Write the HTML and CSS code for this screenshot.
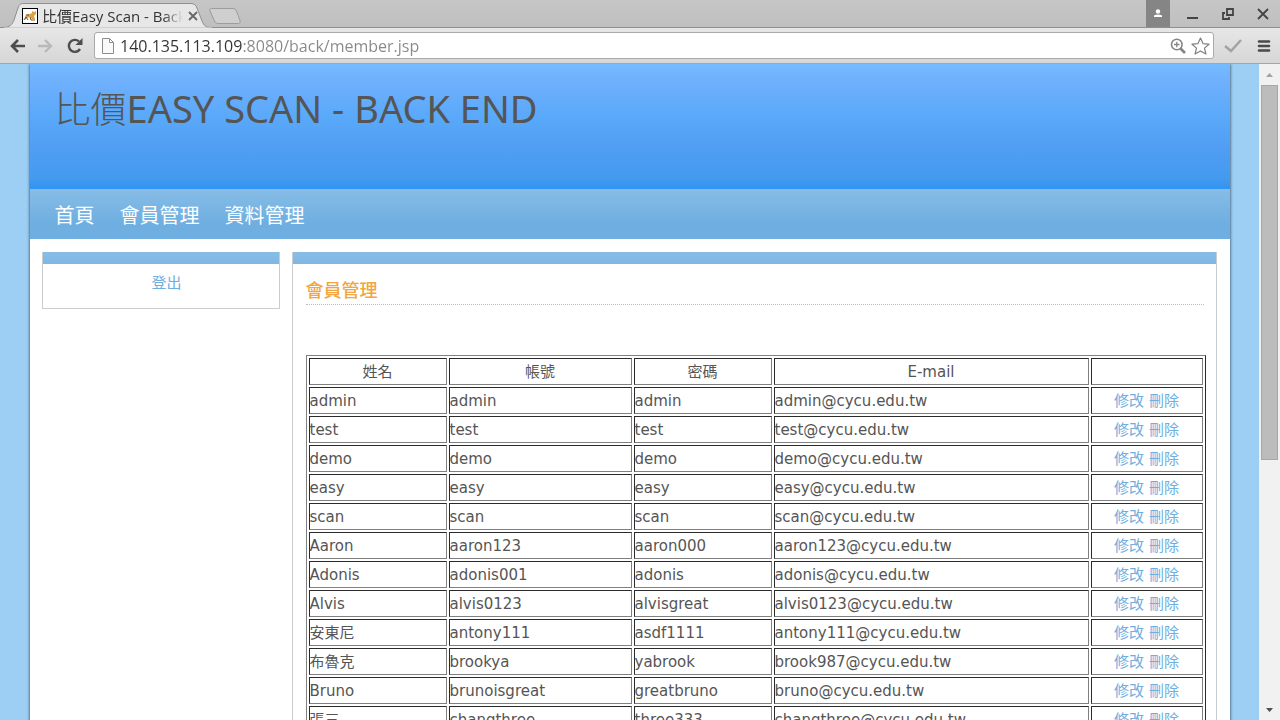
FILE: index.html
```html
<!DOCTYPE html>
<html lang="zh-Hant">
<head>
<meta charset="utf-8">
<title>比價Easy Scan - Back End</title>
<link rel="stylesheet" href="styles.css">
</head>
<body>
<div class="browser">
  <div class="tabstrip">
    <div class="tab">
      <svg class="tab-shape" width="208" height="28" viewBox="0 0 208 28" aria-hidden="true"><path d="M0 27.500C6 27 8 25 10 20L14 8C15.500 4 17 3.500 20 3.500H187C190 3.500 192 5 193 8L198 21C200 26 202 27.500 208 27.500" fill="#e7e7e7" stroke="#8f8f8f"/><path d="M0 28H208" stroke="#e4e4e4"/></svg>
      <div class="tab-content">
        <svg class="favicon" width="16" height="16" viewBox="0 0 16 16" aria-hidden="true"><rect x=".5" y=".5" width="15" height="15" fill="#fff" stroke="#000"/><path d="M3 8L6 6L8 6L10 5L10 3L12 4L14 3L14 6L12 8L13 11H10L8 9L5 10L3 12Z" fill="#dca34a"/><path d="M2 12L4 9L6 12M8 9L9 12L13 12M4 7L7 7" fill="none" stroke="#6b5737"/></svg>
        <span class="tab-title">比價Easy Scan - Back End</span>
        <button class="tab-close" aria-label="Close tab"><svg width="10" height="10" viewBox="0 0 10 10"><path d="M1 1L9 9M9 1L1 9" stroke="#666" stroke-width="1.800"/></svg></button>
      </div>
    </div>
    <button class="new-tab" aria-label="New tab"><svg width="34" height="18" viewBox="0 0 34 18"><path d="M3.500 1.500H25Q27.500 1.500 28.500 4L32 13.500Q33 16.500 30.500 16.500H10Q7.500 16.500 6.500 14L2 4Q1 1.500 3.500 1.500Z" fill="#cfcfcf" stroke="#9c9c9c"/></svg></button>
    <div class="window-buttons">
      <button class="profile" aria-label="Profile"><svg width="10" height="10" viewBox="0 0 10 10"><circle cx="5" cy="2.500" r="2.200" fill="#fff"/><path d="M1 8V7Q1 5.500 5 5.500T9 7V8Z" fill="#fff"/></svg></button>
      <button class="win" aria-label="Minimize"><svg width="12" height="12" viewBox="0 0 12 12"><path d="M0 10H11" stroke="#444" stroke-width="2"/></svg></button>
      <button class="win" aria-label="Restore"><svg width="12" height="12" viewBox="0 0 12 12"><path d="M5 1H11V7H5ZM3 5H1V11H7V9" fill="none" stroke="#444" stroke-width="1.800"/></svg></button>
      <button class="win" aria-label="Close window"><svg width="12" height="12" viewBox="0 0 12 12"><path d="M1 1L11 11M11 1L1 11" stroke="#444" stroke-width="1.800"/></svg></button>
    </div>
  </div>
  <div class="toolbar">
    <button class="tool" aria-label="Back"><svg width="16" height="14" viewBox="0 0 16 14"><path d="M8 1L2 7L8 13M2 7H15" fill="none" stroke="#4d4d4d" stroke-width="2.600"/></svg></button>
    <button class="tool" aria-label="Forward"><svg width="16" height="14" viewBox="0 0 16 14"><path d="M8 1L14 7L8 13M14 7H1" fill="none" stroke="#b9b9b9" stroke-width="2.400"/></svg></button>
    <button class="tool" aria-label="Reload"><svg width="16" height="16" viewBox="0 0 16 16"><path d="M13 11A6 6 0 1 1 12 3.500" fill="none" stroke="#4d4d4d" stroke-width="2.400"/><path d="M15.500 0V7H8.500Z" fill="#4d4d4d"/></svg></button>
    <div class="omnibox">
      <svg width="12" height="16" viewBox="0 0 12 16" aria-hidden="true"><path d="M.5 .5H7.500L11.500 4.500V15.500H.5ZM7.500 .5V4.500H11.500" fill="#fafafa" stroke="#8c8c8c"/></svg>
      <input class="address" type="text" aria-label="Address" value="140.135.113.109:8080/back/member.jsp">
      <button class="in-icon" aria-label="Zoom"><svg width="16" height="16" viewBox="0 0 16 16"><circle cx="6.800" cy="6.500" r="5.300" fill="none" stroke="#858585" stroke-width="1.600"/><path d="M4 6.500H9.500M6.800 3.800V9.300" stroke="#858585" stroke-width="1.300"/><path d="M10.500 10.500L15 15" stroke="#858585" stroke-width="2.600"/></svg></button>
      <button class="in-icon" aria-label="Bookmark"><svg width="19" height="18" viewBox="0 0 19 18"><path d="M9.500 1L12 6.600L18 7.200L13.500 11.100L14.900 17L9.500 13.900L4.100 17L5.500 11.100L1 7.200L7 6.600Z" fill="#fff" stroke="#808080" stroke-width="1.200" stroke-linejoin="round"/></svg></button>
    </div>
    <button class="tool" aria-label="Extension"><svg width="18" height="14" viewBox="0 0 18 14"><path d="M1 7L7 12L17 1" fill="none" stroke="#a2a2a2" stroke-width="2.400"/></svg></button>
    <button class="tool menu" aria-label="Menu"><svg width="14" height="14" viewBox="0 0 14 14"><path d="M2 2.500H12M2 7H12M2 11.500H12" stroke="#4a4a4a" stroke-width="2.600" stroke-linecap="round"/></svg></button>
  </div>
  <div class="viewport">
    <div class="page">
      <div class="wrapper">
        <header class="banner"><h1><span class="han">比價</span>EASY SCAN - BACK END</h1></header>
        <nav class="nav"><a href="#">首頁</a><a href="#">會員管理</a><a href="#">資料管理</a></nav>
        <div class="columns">
          <aside class="box side"><a href="#">登出</a></aside>
          <main class="box main">
            <h2>會員管理</h2>
            <table class="members">
              <colgroup><col class="c-name"><col class="c-account"><col class="c-pass"><col class="c-mail"><col class="c-act"></colgroup>
              <thead><tr><th>姓名</th><th>帳號</th><th>密碼</th><th>E-mail</th><th></th></tr></thead>
              <tbody>
                <tr><td>admin</td><td>admin</td><td>admin</td><td>admin@cycu.edu.tw</td><td class="act"><a href="#">修改</a> <a href="#">刪除</a></td></tr>
                <tr><td>test</td><td>test</td><td>test</td><td>test@cycu.edu.tw</td><td class="act"><a href="#">修改</a> <a href="#">刪除</a></td></tr>
                <tr><td>demo</td><td>demo</td><td>demo</td><td>demo@cycu.edu.tw</td><td class="act"><a href="#">修改</a> <a href="#">刪除</a></td></tr>
                <tr><td>easy</td><td>easy</td><td>easy</td><td>easy@cycu.edu.tw</td><td class="act"><a href="#">修改</a> <a href="#">刪除</a></td></tr>
                <tr><td>scan</td><td>scan</td><td>scan</td><td>scan@cycu.edu.tw</td><td class="act"><a href="#">修改</a> <a href="#">刪除</a></td></tr>
                <tr><td>Aaron</td><td>aaron123</td><td>aaron000</td><td>aaron123@cycu.edu.tw</td><td class="act"><a href="#">修改</a> <a href="#">刪除</a></td></tr>
                <tr><td>Adonis</td><td>adonis001</td><td>adonis</td><td>adonis@cycu.edu.tw</td><td class="act"><a href="#">修改</a> <a href="#">刪除</a></td></tr>
                <tr><td>Alvis</td><td>alvis0123</td><td>alvisgreat</td><td>alvis0123@cycu.edu.tw</td><td class="act"><a href="#">修改</a> <a href="#">刪除</a></td></tr>
                <tr><td>安東尼</td><td>antony111</td><td>asdf1111</td><td>antony111@cycu.edu.tw</td><td class="act"><a href="#">修改</a> <a href="#">刪除</a></td></tr>
                <tr><td>布魯克</td><td>brookya</td><td>yabrook</td><td>brook987@cycu.edu.tw</td><td class="act"><a href="#">修改</a> <a href="#">刪除</a></td></tr>
                <tr><td>Bruno</td><td>brunoisgreat</td><td>greatbruno</td><td>bruno@cycu.edu.tw</td><td class="act"><a href="#">修改</a> <a href="#">刪除</a></td></tr>
                <tr><td>張三</td><td>changthree</td><td>three333</td><td>changthree@cycu.edu.tw</td><td class="act"><a href="#">修改</a> <a href="#">刪除</a></td></tr>
              </tbody>
            </table>
          </main>
        </div>
      </div>
    </div>
    <div class="scrollbar" aria-hidden="true">
      <svg width="21" height="21" viewBox="0 0 21 21"><path d="M7 13L10.500 9L14 13Z" fill="#a3a3a3"/></svg>
      <div class="track"><div class="thumb"></div></div>
      <svg width="21" height="21" viewBox="0 0 21 21"><path d="M7 9L10.500 13L14 9Z" fill="#505050"/></svg>
    </div>
  </div>
</div>
</body>
</html>
```
FILE: styles.css
```css
* { box-sizing: border-box; }
body { margin: 0; color: #555; font: 15px/25px "DejaVu Sans", "Noto Sans CJK TC", sans-serif; }
button { display: flex; align-items: center; justify-content: center; padding: 0; border: 0; background: none; }
svg { display: block; flex: none; }
a { color: #6faee0; text-decoration: none; }

.browser { display: flex; flex-direction: column; height: 100vh; overflow: hidden; }

/* Window chrome */
.tabstrip { display: flex; height: 28px; flex: none; background: linear-gradient(#c6c6c6, #bfbfbf); box-shadow: inset 0 -1px #8f8f8f; }
.tab { display: grid; grid-template-columns: 100%; width: 208px; margin-left: 4px; }
.tab > * { grid-area: 1 / 1; }
.tab-content { display: flex; align-items: center; padding: 4px 9px 0 18px; }
.tab-title { flex: 1; min-width: 0; margin-left: 4px; overflow: hidden; white-space: nowrap; color: #333; font: 15px/20px "Open Sans", "Noto Sans CJK TC", sans-serif; -webkit-mask-image: linear-gradient(90deg, #000 86%, transparent); mask-image: linear-gradient(90deg, #000 86%, transparent); }
.tab-close { width: 20px; height: 20px; flex: none; }
.new-tab { height: 18px; margin-top: 7px; margin-left: -4px; }
.window-buttons { display: flex; margin-left: auto; }
.profile { width: 24px; height: 27px; margin-right: 5px; background: #858585; }
.win { width: 35px; height: 27px; }
.toolbar { display: flex; align-items: center; height: 36px; flex: none; padding: 0 0 0 6px; border-bottom: 1px solid #a5a5a5; background: linear-gradient(#e7e7e7, #d6d6d6); }
.tool { width: 30px; height: 28px; }
.tool:first-child { width: 24px; }
.menu { width: 32px; }
.omnibox { display: flex; flex: 1; align-items: center; height: 27px; margin-left: 4px; margin-right: 4px; padding: 0 2px 0 7px; border: 1px solid #aaa; border-radius: 3px; background: #fff; }
.address { flex: 1; min-width: 0; height: 24px; margin-left: 6px; padding: 0; border: 0; outline: 0; color: transparent; background: linear-gradient(90deg, #333 122px, #888 122px); -webkit-background-clip: text; background-clip: text; font: 16px/24px "Open Sans", sans-serif; }
.in-icon { width: 22px; height: 24px; }

/* Page */
.viewport { display: flex; flex: 1; min-height: 0; }
.page { flex: 1; min-width: 0; overflow: hidden; padding: 0 29px; background: #9dcef4; }
.wrapper { max-width: 1200px; min-height: 100%; margin: 0 auto; background: #fff; box-shadow: 0 0 3px #234; }
.banner { height: 125px; padding: 20px 25px; background: linear-gradient(#76bbff, #6fb0fd 14%, #58a8f9 45%, #539ff4 62%, #439aef 92%, #3093f4); }
h1 { margin: 0; font: 400 38px/48px "Noto Sans", "Noto Sans CJK TC", sans-serif; white-space: nowrap; }
.han { font-size: 36px; font-weight: 300; }
.nav { display: flex; gap: 25px; height: 50px; padding: 0 25px; background: linear-gradient(#87bde7, #6eaee0 70%); }
.nav a { color: #fff; font-size: 20px; line-height: 54px; }
.columns { display: flex; align-items: stretch; gap: 12px; padding: 13px 13px 13px 12px; }
.box { border: 1px solid #ccc; border-top: 0; background: linear-gradient(#87bee6, #7fb7e4) 0 0 / 100% 12px no-repeat; }
.side { flex: none; align-self: flex-start; width: 238px; padding: 19px 12px 12px 24px; text-align: center; }
.main { flex: 1; min-width: 0; padding: 25px 12px 13px 13px; }
h2 { margin: 0 0 50px; border-bottom: 1px dotted #bbb; color: #f2a640; font-size: 18px; font-weight: 500; line-height: 27px; }
.members { width: calc(100% + 2px); table-layout: fixed; border: 1px solid; border-color: #808080 #2b2b2b #2b2b2b #808080; border-spacing: 2px; }
.members th, .members td { height: 27px; padding: 2px 0 0; border: 1px solid; border-color: #2b2b2b #808080 #808080 #2b2b2b; font-weight: 400; line-height: 23px; white-space: nowrap; }
.members .act { text-align: center; }
.c-name { width: 138px; }
.c-account { width: 183px; }
.c-pass { width: 138px; }
.c-act { width: 112px; }

.scrollbar { display: flex; flex-direction: column; width: 21px; flex: none; background: #f1f1f1; }
.track { flex: 1; padding: 0 2px; }
.thumb { height: 61%; border: 1px solid #a8a8a8; background: #bcbcbc; }
```
